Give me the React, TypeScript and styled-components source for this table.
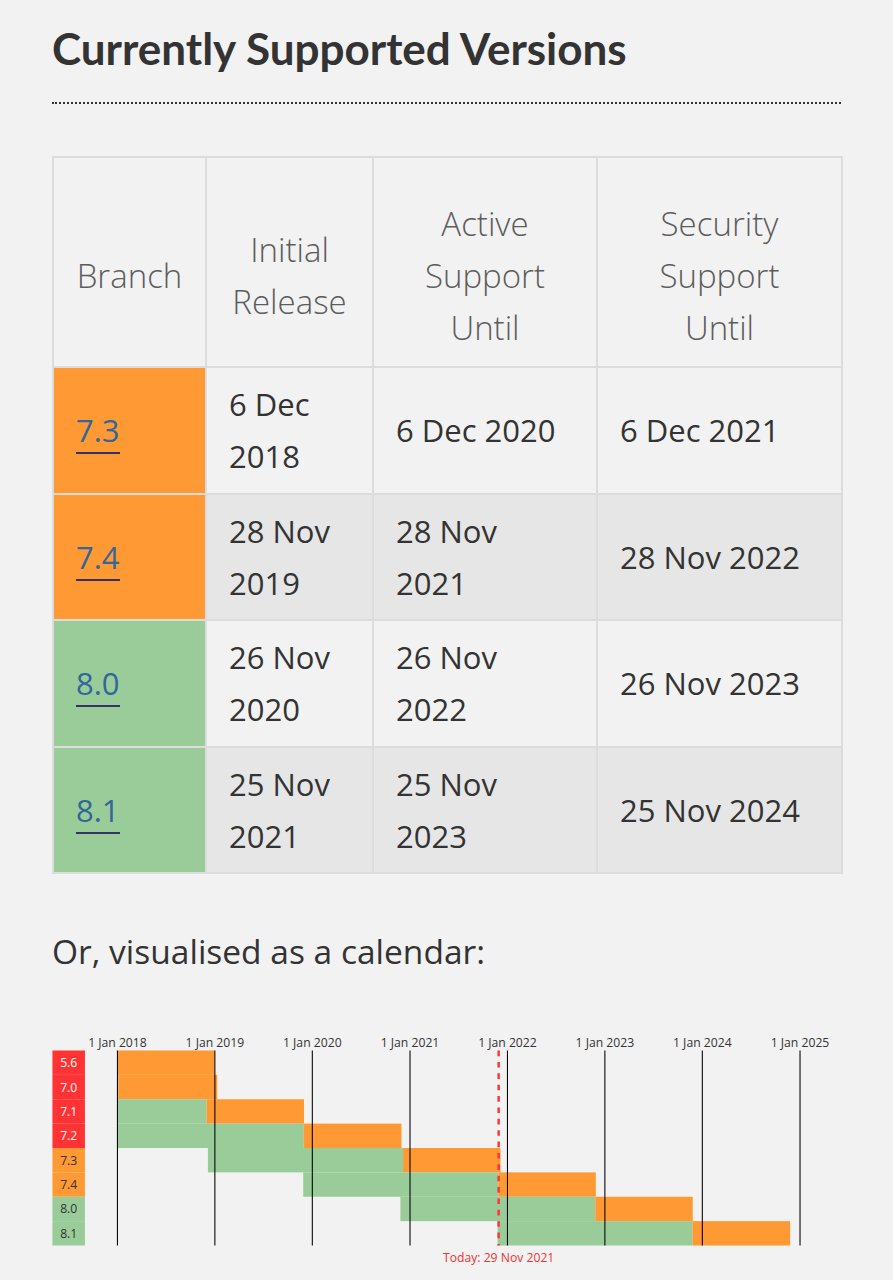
import React from "react";
import styled, { createGlobalStyle } from "styled-components";

const Global = createGlobalStyle`
  html, body { margin: 0; padding: 0; background: #f2f2f2; }
  body { font-family: "Open Sans", "Noto Sans", sans-serif; color: #333; }
`;

const Page = styled.main`
  padding: 0 52px 16px;
  min-height: 1280px;
  box-sizing: border-box;
`;

const Heading = styled.h2`
  margin: 0;
  padding: 22px 0 27px;
  font-family: "Lato", "Open Sans", sans-serif;
  font-weight: 700;
  font-size: 44px;
  line-height: 53px;
  color: #333;
  border-bottom: 2px dotted #333;
`;

const Table = styled.table`
  margin-top: 52px;
  width: 789px;
  border-collapse: collapse;
  table-layout: fixed;
  border: 2px solid #dcdcdc;
`;

const HeadCell = styled.th`
  border: 2px solid #dcdcdc;
  padding: 40px 8px 12px;
  font-family: "Open Sans", sans-serif;
  font-weight: 300;
  font-size: 33px;
  line-height: 52px;
  color: #5c5c5c;
  text-align: center;
  vertical-align: middle;
  background: #f2f2f2;
`;

const BodyRow = styled.tr<{ $alt: boolean }>`
  background: ${(p) => (p.$alt ? "#e6e6e6" : "#f2f2f2")};
`;

const Cell = styled.td`
  border: 2px solid #dcdcdc;
  height: 104.5px;
  padding: 10px 12px 10px 22px;
  font-size: 31px;
  line-height: 52px;
  color: #333;
  vertical-align: middle;
  text-align: left;
`;

const BranchCell = styled(Cell)<{ $state: State }>`
  background: ${(p) => stateColor[p.$state]};
`;

const VersionLink = styled.a`
  color: #369;
  text-decoration: none;
  border-bottom: 2px solid #336;
  padding-bottom: 1px;
`;

const Line = styled.span`
  white-space: nowrap;
  display: block;
`;

const Lead = styled.p`
  margin: 51px 0 0;
  font-size: 33.5px;
  line-height: 52px;
  color: #333;
`;

const Chart = styled.svg`
  display: block;
  margin-top: 54px;
  width: 789px;
  height: 234px;
  overflow: visible;
  font-family: "Open Sans", sans-serif;
`;

type State = "eol" | "security" | "stable";
const stateColor: Record<State, string> = {
  eol: "#f33",
  security: "#f93",
  stable: "#9c9",
};

const Bar = styled.rect<{ $state: State }>`
  fill: ${(p) => stateColor[p.$state]};
`;

const LabelText = styled.text<{ $state: State }>`
  fill: ${(p) => (p.$state === "eol" ? "#fff" : "#333")};
  font-size: 15px;
  text-anchor: middle;
  dominant-baseline: central;
`;

const YearLine = styled.line`
  stroke: #000;
  stroke-width: 1.3;
`;

const YearText = styled.text`
  fill: #333;
  font-size: 15px;
  text-anchor: middle;
`;

const TodayLine = styled.line`
  stroke: #f33;
  stroke-dasharray: 7, 7;
  stroke-width: 3px;
`;

const TodayText = styled.text`
  fill: #e33;
  font-size: 15px;
  text-anchor: middle;
`;

type D = [number, number, number];

const rows: {
  branch: string;
  state: State;
  release: string[];
  active: string[];
  security: string[];
}[] = [
  { branch: "7.3", state: "security", release: ["6 Dec", "2018"], active: ["6 Dec 2020"], security: ["6 Dec 2021"] },
  { branch: "7.4", state: "security", release: ["28 Nov", "2019"], active: ["28 Nov", "2021"], security: ["28 Nov 2022"] },
  { branch: "8.0", state: "stable", release: ["26 Nov", "2020"], active: ["26 Nov", "2022"], security: ["26 Nov 2023"] },
  { branch: "8.1", state: "stable", release: ["25 Nov", "2021"], active: ["25 Nov", "2023"], security: ["25 Nov 2024"] },
];

const branches: { v: string; state: State; release: D; active: D; security: D }[] = [
  { v: "5.6", state: "eol", release: [2014, 8, 28], active: [2017, 1, 19], security: [2018, 12, 31] },
  { v: "7.0", state: "eol", release: [2015, 12, 3], active: [2018, 1, 4], security: [2019, 1, 10] },
  { v: "7.1", state: "eol", release: [2016, 12, 1], active: [2018, 12, 1], security: [2019, 12, 1] },
  { v: "7.2", state: "eol", release: [2017, 11, 30], active: [2019, 11, 30], security: [2020, 11, 30] },
  { v: "7.3", state: "security", release: [2018, 12, 6], active: [2020, 12, 6], security: [2021, 12, 6] },
  { v: "7.4", state: "security", release: [2019, 11, 28], active: [2021, 11, 28], security: [2022, 11, 28] },
  { v: "8.0", state: "stable", release: [2020, 11, 26], active: [2022, 11, 26], security: [2023, 11, 26] },
  { v: "8.1", state: "stable", release: [2021, 11, 25], active: [2023, 11, 25], security: [2024, 11, 25] },
];

const MARGIN_LEFT = 80;
const HEADER = 24;
const YEAR_W = 120;
const BRANCH_H = 30;
const START = Date.UTC(2018, 0, 1);
const hx = (d: D) => {
  const days = (Date.UTC(d[0], d[1] - 1, d[2]) - START) / 86400000;
  return MARGIN_LEFT + Math.max(0, days / 365.24) * YEAR_W;
};
const years = [2018, 2019, 2020, 2021, 2022, 2023, 2024, 2025];
const today: D = [2021, 11, 29];
const chartBottom = HEADER + branches.length * BRANCH_H;

const Lines = ({ lines }: { lines: string[] }) => (
  <>
    {lines.map((l) => (
      <Line key={l}>{l}</Line>
    ))}
  </>
);

const Calendar = () => (
  <Chart viewBox="0 0 970 288">
    <g>
      {branches.map((b, i) => {
        const y = HEADER + i * BRANCH_H;
        const x1 = hx(b.release);
        const x2 = hx(b.active);
        const x3 = hx(b.security);
        return (
          <g key={b.v}>
            {x2 > x1 && <Bar $state="stable" x={x1} y={y} width={x2 - x1} height={BRANCH_H} />}
            {x3 > x2 && <Bar $state="security" x={x2} y={y} width={x3 - x2} height={BRANCH_H} />}
          </g>
        );
      })}
    </g>
    <g>
      {branches.map((b, i) => {
        const y = HEADER + i * BRANCH_H;
        return (
          <g key={b.v}>
            <Bar $state={b.state} x={0} y={y} width={MARGIN_LEFT / 2} height={BRANCH_H} />
            <LabelText $state={b.state} x={MARGIN_LEFT / 4} y={y + BRANCH_H / 2}>
              {b.v}
            </LabelText>
          </g>
        );
      })}
    </g>
    <g>
      {years.map((yr) => {
        const x = hx([yr, 1, 1]);
        return (
          <g key={yr}>
            <YearLine x1={x} y1={HEADER} x2={x} y2={chartBottom} />
            <YearText x={x} y={HEADER * 0.8}>
              1 Jan {yr}
            </YearText>
          </g>
        );
      })}
    </g>
    <g>
      <TodayLine x1={hx(today)} y1={HEADER} x2={hx(today)} y2={chartBottom} />
      <TodayText x={hx(today)} y={284}>
        Today: 29 Nov 2021
      </TodayText>
    </g>
  </Chart>
);

export default function App() {
  return (
    <>
      <Global />
      <Page>
        <Heading>Currently Supported Versions</Heading>
        <Table>
          <colgroup>
            <col style={{ width: 153 }} />
            <col style={{ width: 167 }} />
            <col style={{ width: 224 }} />
            <col style={{ width: 245 }} />
          </colgroup>
          <thead>
            <tr>
              <HeadCell>Branch</HeadCell>
              <HeadCell>
                <Lines lines={["Initial", "Release"]} />
              </HeadCell>
              <HeadCell>
                <Lines lines={["Active", "Support", "Until"]} />
              </HeadCell>
              <HeadCell>
                <Lines lines={["Security", "Support", "Until"]} />
              </HeadCell>
            </tr>
          </thead>
          <tbody>
            {rows.map((r, i) => (
              <BodyRow key={r.branch} $alt={i % 2 === 1}>
                <BranchCell $state={r.state}>
                  <VersionLink href={`#v${r.branch}`}>{r.branch}</VersionLink>
                </BranchCell>
                <Cell>
                  <Lines lines={r.release} />
                </Cell>
                <Cell>
                  <Lines lines={r.active} />
                </Cell>
                <Cell>
                  <Lines lines={r.security} />
                </Cell>
              </BodyRow>
            ))}
          </tbody>
        </Table>
        <Lead>Or, visualised as a calendar:</Lead>
        <Calendar />
      </Page>
    </>
  );
}
